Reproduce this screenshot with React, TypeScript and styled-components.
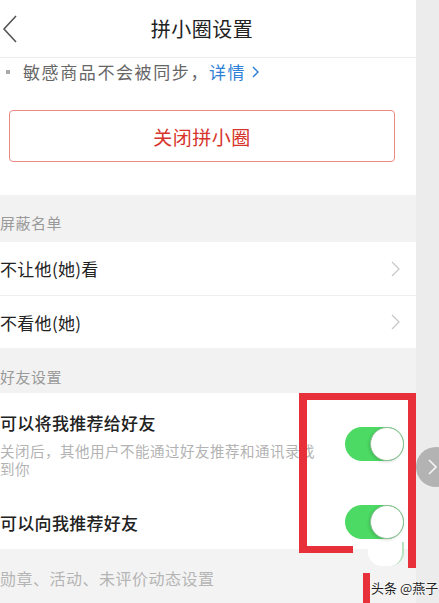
import React from "react";
import styled, { createGlobalStyle } from "styled-components";

const GlobalStyle = createGlobalStyle`
  html, body {
    margin: 0;
    padding: 0;
    background: #ededed;
    font-family: "Noto Sans CJK SC", "Noto Sans", sans-serif;
  }
  * { box-sizing: border-box; }
`;

const Page = styled.div`
  position: relative;
  display: flex;
  width: 439px;
  height: 603px;
  overflow: hidden;
`;

const Main = styled.div`
  width: 416px;
  display: flex;
  flex-direction: column;
  background: #f2f2f2;
`;

const SideStrip = styled.div`
  flex: 1;
  background: #ececec;
`;

const Header = styled.header`
  height: 58px;
  display: grid;
  grid-template-columns: 40px 1fr 40px;
  align-items: center;
  background: #fff;
  border-bottom: 1px solid #ececec;
`;

const BackBtn = styled.div`
  display: flex;
  align-items: center;
  padding-left: 2px;
  height: 100%;
`;

const Title = styled.h1`
  margin: 0;
  padding-right: 12px;
  text-align: center;
  font-size: 20px;
  font-weight: 400;
  color: #222;
  letter-spacing: 0.5px;
`;

const TopCard = styled.section`
  background: #fff;
  padding: 2px 0 33px;
`;

const Notice = styled.p`
  display: flex;
  align-items: center;
  margin: 0;
  padding-left: 5px;
  line-height: 24px;
  font-size: 17px;
  color: #666;
  letter-spacing: 1.6px;
`;

const Dot = styled.span`
  display: inline-block;
  width: 4px;
  height: 4px;
  margin: 0 13px 0 1px;
  background: #aaa;
`;

const Link = styled.span`
  display: inline-flex;
  align-items: center;
  gap: 6px;
  color: #2d7fd8;
`;

const CloseButton = styled.button`
  display: block;
  margin: 26px 0 0 9px;
  width: 386px;
  height: 52px;
  border: 1px solid #ea8a86;
  border-radius: 4px;
  background: #fff;
  color: #d7342c;
  font-family: inherit;
  font-size: 19px;
  letter-spacing: 0.5px;
`;

const SectionLabel = styled.div<{ $top: number; $bottom: number; $size?: number; $color?: string }>`
  padding: ${(p) => p.$top}px 0 ${(p) => p.$bottom}px 0;
  line-height: 24px;
  font-size: ${(p) => p.$size ?? 15}px;
  color: ${(p) => p.$color ?? "#9a9a9a"};
  letter-spacing: 0.5px;
`;

const Group = styled.div`
  background: #fff;
`;

const LinkRow = styled.div<{ $h: number; $divider?: boolean }>`
  height: ${(p) => p.$h}px;
  display: flex;
  align-items: center;
  justify-content: space-between;
  padding-right: 16px;
  border-bottom: ${(p) => (p.$divider ? "1px solid #efefef" : "none")};
`;

const RowText = styled.span<{ $weight?: number }>`
  font-size: 17px;
  color: #222;
  font-weight: ${(p) => p.$weight ?? 400};
  letter-spacing: 0.3px;
`;

const SwitchRow = styled.div<{ $h?: number }>`
  display: flex;
  align-items: center;
  justify-content: space-between;
  padding: ${(p) => (p.$h ? "0" : "17px 0")};
  padding-right: 12px;
  height: ${(p) => (p.$h ? `${p.$h}px` : "auto")};
`;

const SwitchText = styled.div`
  display: flex;
  flex-direction: column;
  gap: 7px;
`;

const SubText = styled.p`
  margin: 0;
  width: 318px;
  font-size: 14.5px;
  line-height: 18px;
  color: #b3b3b3;
  letter-spacing: 0.5px;
`;

const Toggle = styled.div`
  position: relative;
  flex: none;
  width: 59px;
  height: 34px;
  border-radius: 17px;
  background: #4cd964;
`;

const Knob = styled.div`
  position: absolute;
  right: 0;
  top: 0;
  width: 34px;
  height: 34px;
  border-radius: 50%;
  background: #fff;
  border: 1.5px solid #8fbf97;
  box-shadow: -1px 1px 3px rgba(0, 0, 0, 0.15);
`;

const BottomSection = styled.div`
  flex: 1;
  background: #f3f3f3;
`;

/* annotation overlays */
const RedBar = styled.div<{ $x: number; $y: number; $w: number; $h: number }>`
  position: absolute;
  left: ${(p) => p.$x}px;
  top: ${(p) => p.$y}px;
  width: ${(p) => p.$w}px;
  height: ${(p) => p.$h}px;
  background: #e8303a;
`;

const GhostKnob = styled.div`
  position: absolute;
  left: 368px;
  top: 542px;
  width: 36px;
  height: 24px;
  border-radius: 0 0 14px 14px;
  background: #fff;
  border-right: 2px solid #b6e2bd;
`;

const SideButton = styled.div`
  position: absolute;
  left: 416px;
  top: 447px;
  width: 40px;
  height: 40px;
  border-radius: 50%;
  background: #b3b3b3;
  display: flex;
  align-items: center;
  padding-left: 12px;
`;

const Watermark = styled.div`
  position: absolute;
  left: 371px;
  top: 578px;
  font-size: 13px;
  color: #222;
  text-shadow: 0 0 2px #fff, 0 0 2px #fff;
  white-space: nowrap;
`;

function Chevron({ color = "#c8c8c8", w = 9, h = 16, sw = 1.3 }: { color?: string; w?: number; h?: number; sw?: number }) {
  return (
    <svg width={w} height={h} viewBox={`0 0 ${w} ${h}`} fill="none">
      <path d={`M1 1 L${w - 1} ${h / 2} L1 ${h - 1}`} stroke={color} strokeWidth={sw} />
    </svg>
  );
}

export default function App() {
  return (
    <>
      <GlobalStyle />
      <Page>
        <Main>
          <Header>
            <BackBtn>
              <svg width="16" height="28" viewBox="0 0 16 28" fill="none">
                <path d="M14 1 L2 14 L14 27" stroke="#555" strokeWidth="1.6" />
              </svg>
            </BackBtn>
            <Title>拼小圈设置</Title>
            <span />
          </Header>

          <TopCard>
            <Notice>
              <Dot />
              敏感商品不会被同步，
              <Link>
                详情
                <Chevron color="#2d7fd8" w={7} h={12} sw={1.5} />
              </Link>
            </Notice>
            <CloseButton>关闭拼小圈</CloseButton>
          </TopCard>

          <SectionLabel $top={16} $bottom={7}>屏蔽名单</SectionLabel>
          <Group>
            <LinkRow $h={54} $divider>
              <RowText>不让他(她)看</RowText>
              <Chevron />
            </LinkRow>
            <LinkRow $h={52}>
              <RowText>不看他(她)</RowText>
              <Chevron />
            </LinkRow>
          </Group>

          <SectionLabel $top={17} $bottom={4}>好友设置</SectionLabel>
          <Group>
            <SwitchRow>
              <SwitchText>
                <RowText $weight={500}>可以将我推荐给好友</RowText>
                <SubText>关闭后，其他用户不能通过好友推荐和通讯录找到你</SubText>
              </SwitchText>
              <Toggle>
                <Knob />
              </Toggle>
            </SwitchRow>
            <SwitchRow $h={54}>
              <RowText $weight={500}>可以向我推荐好友</RowText>
              <Toggle>
                <Knob />
              </Toggle>
            </SwitchRow>
          </Group>

          <BottomSection>
            <SectionLabel $top={17} $bottom={0} $size={16} $color="#b5b5b5">
              勋章、活动、未评价动态设置
            </SectionLabel>
          </BottomSection>
        </Main>
        <SideStrip />

        <GhostKnob />
        <RedBar $x={299} $y={393} $w={117} $h={7} />
        <RedBar $x={299} $y={393} $w={8} $h={160} />
        <RedBar $x={408} $y={393} $w={8} $h={175} />
        <RedBar $x={299} $y={546} $w={54} $h={7} />
        <RedBar $x={363} $y={573} $w={7} $h={30} />

        <SideButton>
          <Chevron color="#f4f4f4" w={9} h={16} sw={1.6} />
        </SideButton>
        <Watermark>头条 @燕子</Watermark>
      </Page>
    </>
  );
}
